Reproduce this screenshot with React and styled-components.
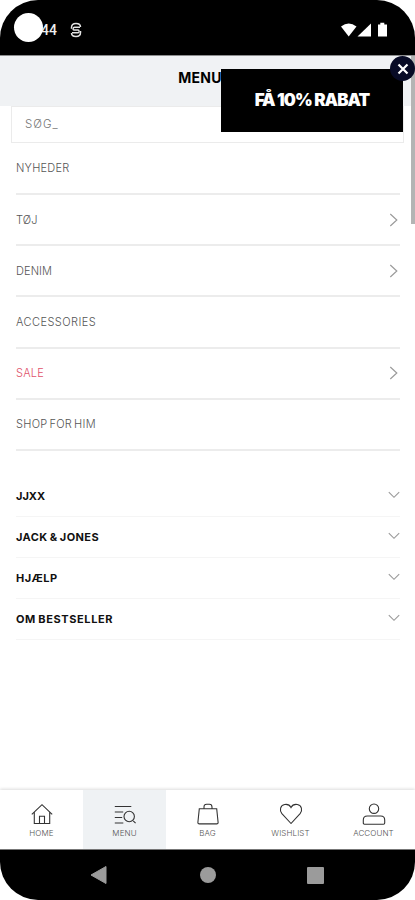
import React from "react";
import styled, { createGlobalStyle } from "styled-components";

const categories = [
  { label: "NYHEDER", spacing: 0.25 },
  { label: "TØJ", arrow: true, spacing: 0.1 },
  { label: "DENIM", arrow: true, spacing: 0.1 },
  { label: "ACCESSORIES", spacing: 0.45 },
  { label: "SALE", arrow: true, sale: true, spacing: 0.25 },
  { label: "SHOP FOR HIM", spacing: 0.3 },
];

const sections = [
  { label: "JJXX", spacing: 0 },
  { label: "JACK & JONES", spacing: 0.4 },
  { label: "HJÆLP", spacing: 0.5 },
  { label: "OM BESTSELLER", spacing: 0.6 },
];

const HomeIcon = () => (
  <TabIcon viewBox="0 0 24 24">
    <path d="M1.800 12.300 12 2.700l10.200 9.600M4.300 10.300v11.200h15.400V10.300M9.500 21.500v-7.200h5v7.200" />
  </TabIcon>
);

const MenuIcon = () => (
  <TabIcon viewBox="0 0 24 24">
    <path d="M1.800 4.500h16.500M1.800 10h8.400M1.800 15.500h7.400M1.800 21h8.500M20.200 18.800l2.400 2.400" />
    <circle cx="16.200" cy="14.500" r="5.200" />
  </TabIcon>
);

const BagIcon = () => (
  <TabIcon viewBox="0 0 24 24">
    <path d="M3.300 6.700h17.400l1.400 13.600c.1 1-.4 1.600-1.400 1.600H3.300c-1 0-1.500-.6-1.400-1.600zM8 6.700V5c0-1.800 1-2.800 2.600-2.800h2.800C15 2.200 16 3.200 16 5v1.700" />
  </TabIcon>
);

const HeartIcon = () => (
  <TabIcon viewBox="0 0 24 24">
    <path d="M12 21.500 2.900 11.700C.2 8.500 1.200 3.200 5.700 2.500 8.800 2 11 3.500 12 5.500c1-2 3.200-3.500 6.300-3 4.500.7 5.500 6 2.800 9.200z" />
  </TabIcon>
);

const AccountIcon = () => (
  <TabIcon viewBox="0 0 24 24">
    <circle cx="12" cy="6.700" r="4.700" />
    <path d="M1.300 21v-3c0-2.500 1.500-4 4-4h13.400c2.500 0 4 1.500 4 4v3c0 .8-.4 1.200-1.200 1.200h-19c-.8 0-1.200-.4-1.200-1.200z" />
  </TabIcon>
);

const tabs = [
  { label: "HOME", Icon: HomeIcon },
  { label: "MENU", Icon: MenuIcon, active: true },
  { label: "BAG", Icon: BagIcon },
  { label: "WISHLIST", Icon: HeartIcon },
  { label: "ACCOUNT", Icon: AccountIcon },
];

const App = () => {
  return (
    <>
      <GlobalStyle />
      <Phone>
        <StatusBar>
          <StatusGroup>
            <Clock>44</Clock>
            <svg width="12" height="16" viewBox="0 0 12 16" fill="none" stroke="#e4e4e4">
              <path
                d="M1.500 6.800V5.500C1.500 3 3.300 1.500 6 1.500s4.500 1.500 4.500 3.500M10.500 9v1.500c0 2.500-1.800 4-4.500 4s-4.500-1.500-4.500-3.500"
                strokeWidth="1.500"
              />
              <path d="M10 5.200H4.500C3 5.200 2.500 8 4 8h4c1.500 0 1.500 2.800 0 2.800H2" strokeWidth="1.400" />
            </svg>
          </StatusGroup>
          <svg width="49" height="16" viewBox="0 0 49 16" fill="#fff">
            <path d="M1 4.500Q8.700-1.500 16.500 4.500L8.700 14.500z" />
            <path d="M31 1.500v13H17.500z" />
            <path d="M38 2.500h2.300V.8h4v1.700H47v12h-9z" />
          </svg>
          <Camera />
        </StatusBar>

        <Screen>
          <Header>MENU</Header>
          <Search>SØG_</Search>
          <CategoryList>
            {categories.map(({ label, arrow, sale, spacing }) => (
              <Category key={label} $sale={sale} $spacing={spacing}>
                {label}
                {arrow && (
                  <RightArrow viewBox="0 0 9 14">
                    <path d="M1.300 1 7.800 7l-6.500 6" />
                  </RightArrow>
                )}
              </Category>
            ))}
          </CategoryList>
          <SectionList>
            {sections.map(({ label, spacing }) => (
              <Section key={label} $spacing={spacing}>
                {label}
                <DownArrow viewBox="0 0 12 8">
                  <path d="M.8 1.200 6 6.300l5.200-5.100" />
                </DownArrow>
              </Section>
            ))}
          </SectionList>
          <ScrollThumb />
          <Promo>
            FÅ 10% RABAT
            <CloseButton aria-label="Luk">
              <svg width="12" height="12" viewBox="0 0 12 12" stroke="#fff" strokeWidth="2.200">
                <path d="m1.500 1.500 9 9m0-9-9 9" />
              </svg>
            </CloseButton>
          </Promo>
        </Screen>

        <TabBar>
          {tabs.map(({ label, Icon, active }) => (
            <Tab key={label} $active={active}>
              <Icon />
              {label}
            </Tab>
          ))}
        </TabBar>

        <SystemNav>
          <svg width="18" height="20" viewBox="0 0 18 20" fill="#9b9b9b">
            <path d="M16 1.500v17L1 10z" stroke="#9b9b9b" strokeLinejoin="round" />
          </svg>
          <NavCircle />
          <NavSquare />
        </SystemNav>
      </Phone>
    </>
  );
};

export default App;

const GlobalStyle = createGlobalStyle`
  * {
    box-sizing: border-box;
  }
  body {
    margin: 0;
    background: #fff;
    font-family: Inter, "Liberation Sans", sans-serif;
  }
`;

const Phone = styled.div`
  display: flex;
  flex-direction: column;
  width: 415px;
  height: 900px;
  overflow: hidden;
  border-radius: 38px;
  background: #fff;
`;

const StatusBar = styled.div`
  position: relative;
  display: flex;
  justify-content: space-between;
  align-items: center;
  flex: none;
  height: 56px;
  padding: 4px 26px 0 41px;
  background: #000;
  border-bottom: 1px solid #8c8d8e;
`;

const StatusGroup = styled.div`
  display: flex;
  align-items: center;
  gap: 12px;
`;

const Clock = styled.span`
  width: 17px;
  color: #eee;
  font-family: Roboto, sans-serif;
  font-size: 14px;
  font-weight: 500;
`;

const Camera = styled.div`
  position: absolute;
  top: 13px;
  left: 14px;
  width: 29px;
  height: 29px;
  border-radius: 50%;
  background: #fff;
`;

const Screen = styled.main`
  position: relative;
  flex: 1;
`;

const Header = styled.header`
  display: flex;
  justify-content: center;
  height: 50px;
  padding: 13px 15px 0 0;
  background: #f0f2f4;
  color: #000;
  font-size: 14px;
  line-height: 18px;
  font-weight: 700;
  letter-spacing: 0.2px;
`;

const Search = styled.div`
  display: flex;
  align-items: center;
  height: 37px;
  margin: 0 11px;
  padding: 0 13px 1px;
  border: 1px solid #ebebeb;
  color: #777;
  font-size: 11.5px;
  font-weight: 300;
  letter-spacing: 1px;
`;

const CategoryList = styled.ul`
  margin: 0.8px 0 0;
  padding: 0 15px 0 16px;
  list-style: none;
`;

const Category = styled.li`
  display: flex;
  justify-content: space-between;
  align-items: center;
  height: 51.2px;
  padding: 0 2px 0 0;
  border-bottom: 2px solid #ececec;
  color: ${(p) => (p.$sale ? "#e0526a" : "#555")};
  font-size: 11px;
  font-weight: 300;
  letter-spacing: ${(p) => p.$spacing}px;
  word-spacing: -1.5px;
`;

const SectionList = styled.ul`
  margin: 25.2px 0 0;
  padding: 0 15px 0 16px;
  list-style: none;
`;

const Section = styled.li`
  display: flex;
  justify-content: space-between;
  align-items: center;
  height: 41px;
  border-bottom: 1px solid #f5f5f5;
  color: #111;
  font-size: 11px;
  font-weight: 700;
  letter-spacing: ${(p) => p.$spacing}px;
  word-spacing: -0.8px;
`;

const RightArrow = styled.svg`
  width: 9px;
  height: 14px;
  fill: none;
  stroke: #9b9b9b;
  stroke-width: 1.2;
`;

const DownArrow = styled.svg`
  width: 12px;
  height: 8px;
  margin-bottom: 3px;
  fill: none;
  stroke: #999;
  stroke-width: 1.1;
`;

const ScrollThumb = styled.div`
  position: absolute;
  top: 0;
  right: 0;
  width: 4px;
  height: 168px;
  background: #b4b4b4;
`;

const Promo = styled.div`
  position: absolute;
  top: 13px;
  right: 12px;
  display: flex;
  justify-content: center;
  align-items: center;
  width: 182px;
  height: 63px;
  padding-bottom: 2px;
  background: #000;
  color: #fff;
  font-size: 17px;
  font-weight: 900;
  letter-spacing: -0.95px;
  white-space: nowrap;
`;

const CloseButton = styled.button`
  position: absolute;
  top: -13px;
  right: -12px;
  display: flex;
  justify-content: center;
  align-items: center;
  width: 25px;
  height: 25px;
  padding: 0;
  border: 0;
  border-radius: 50%;
  background: #080b26;
`;

const TabBar = styled.nav`
  display: flex;
  flex: none;
  height: 60px;
  background: #fff;
  border-bottom: 1px solid #777;
  box-shadow: 0 -1px 3px rgba(0, 0, 0, 0.14);
`;

const Tab = styled.a`
  display: flex;
  flex-direction: column;
  align-items: center;
  flex: 1;
  gap: 2px;
  padding-top: 12px;
  background: ${(p) => (p.$active ? "#eff2f4" : "transparent")};
  color: #555;
  font-size: 8px;
  line-height: 10px;
  font-weight: 300;
  letter-spacing: 0.1px;
`;

const TabIcon = styled.svg`
  width: 24px;
  height: 24px;
  fill: none;
  stroke: #333;
  stroke-width: 1.1;
`;

const SystemNav = styled.div`
  display: flex;
  justify-content: space-between;
  align-items: center;
  flex: none;
  height: 50px;
  padding: 0 91px 0 90px;
  background: #000;
`;

const NavCircle = styled.div`
  width: 16px;
  height: 16px;
  border-radius: 50%;
  background: #9b9b9b;
`;

const NavSquare = styled.div`
  width: 17px;
  height: 17px;
  border-radius: 1px;
  background: #9b9b9b;
`;
